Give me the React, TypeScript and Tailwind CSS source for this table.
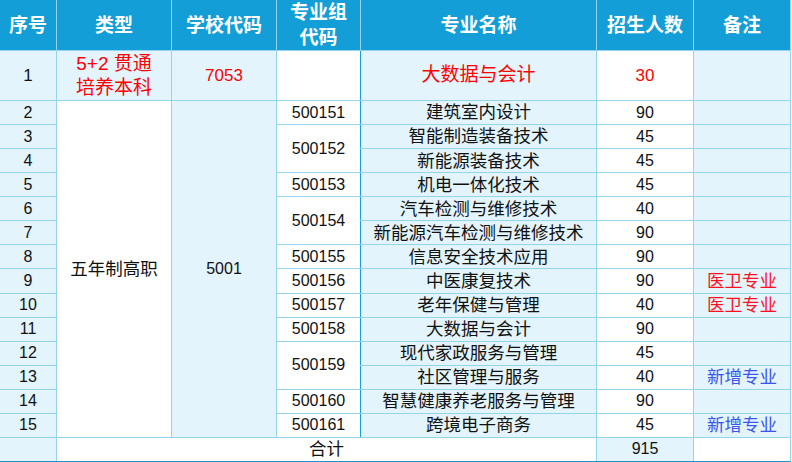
import React from "react";

// one row of the enrolment table
interface Major {
  no: number;
  code?: string;
  span?: number;
  name: string;
  count: number;
  note?: "red" | "blue";
  noteText?: string;
}

const majors: Major[] = [
  { no: 2, code: "500151", name: "建筑室内设计", count: 90 },
  { no: 3, code: "500152", span: 2, name: "智能制造装备技术", count: 45 },
  { no: 4, name: "新能源装备技术", count: 45 },
  { no: 5, code: "500153", name: "机电一体化技术", count: 45 },
  { no: 6, code: "500154", span: 2, name: "汽车检测与维修技术", count: 40 },
  { no: 7, name: "新能源汽车检测与维修技术", count: 90 },
  { no: 8, code: "500155", name: "信息安全技术应用", count: 90 },
  { no: 9, code: "500156", name: "中医康复技术", count: 90, note: "red", noteText: "医卫专业" },
  { no: 10, code: "500157", name: "老年保健与管理", count: 40, note: "red", noteText: "医卫专业" },
  { no: 11, code: "500158", name: "大数据与会计", count: 90 },
  { no: 12, code: "500159", span: 2, name: "现代家政服务与管理", count: 45 },
  { no: 13, name: "社区管理与服务", count: 40, note: "blue", noteText: "新增专业" },
  { no: 14, code: "500160", name: "智慧健康养老服务与管理", count: 90 },
  { no: 15, code: "500161", name: "跨境电子商务", count: 45, note: "blue", noteText: "新增专业" },
];

const cell = "flex items-center justify-center text-center";
const light = "bg-[#e3f4fc]";
const white = "bg-white";
const head = "bg-[#139ed7] text-white font-bold text-[19px] leading-[25px]";
const divider = "shadow-[-1px_0_0_#169fde]";

const App: React.FC = () => {
  return (
    <div
      className="w-[792px] h-[462px] bg-white"
      style={{ fontFamily: '"Liberation Sans", "Noto Sans CJK SC", sans-serif' }}
    >
      <div className="grid w-[791px] h-[462px] gap-px bg-[#93d5f1] border-r border-r-[#93d5f1] border-b border-b-[#2090c8] grid-cols-[56px_114px_104px_83px_235px_96px_96px] grid-rows-[50px_49px_repeat(14,23.07px)_23px] text-[#111]">
        {/* header */}
        <div className={`${cell} ${head}`}>序号</div>
        <div className={`${cell} ${head}`}>类型</div>
        <div className={`${cell} ${head}`}>学校代码</div>
        <div className={`${cell} ${head}`}>
          专业组
          <br />
          代码
        </div>
        <div className={`${cell} ${head}`}>专业名称</div>
        <div className={`${cell} ${head}`}>招生人数</div>
        <div className={`${cell} ${head}`}>备注</div>

        {/* row 1 */}
        <div className={`${cell} ${light} text-[17px]`}>1</div>
        <div className={`${cell} ${light} text-[19px] leading-[24px] text-[#ff0000]`}>
          5+2 贯通
          <br />
          培养本科
        </div>
        <div className={`${cell} ${light} text-[17px] text-[#ff0000]`}>7053</div>
        <div className={`${cell} ${white}`}></div>
        <div className={`${cell} ${light} ${divider} text-[19px] text-[#ff0000]`}>大数据与会计</div>
        <div className={`${cell} ${white} text-[17px] text-[#ff0000]`}>30</div>
        <div className={`${cell} ${light}`}></div>

        {/* merged cells for rows 2-15 */}
        <div className={`${cell} ${white} col-start-2 row-start-3 row-span-14 text-[17.5px]`}>五年制高职</div>
        <div className={`${cell} ${light} col-start-3 row-start-3 row-span-14 text-[16px]`}>5001</div>

        {majors.map((m) => {
          const r = m.no + 1;
          return (
            <React.Fragment key={m.no}>
              <div className={`${cell} ${light} col-start-1 text-[16px]`} style={{ gridRowStart: r }}>
                {m.no}
              </div>
              {m.code && (
                <div
                  className={`${cell} ${white} col-start-4 text-[16px]`}
                  style={{ gridRow: `${r} / span ${m.span ?? 1}` }}
                >
                  {m.code}
                </div>
              )}
              <div
                className={`${cell} ${light} ${divider} col-start-5 text-[17.5px] whitespace-nowrap`}
                style={{ gridRowStart: r }}
              >
                {m.name}
              </div>
              <div className={`${cell} ${white} col-start-6 text-[16px]`} style={{ gridRowStart: r }}>
                {m.count}
              </div>
              <div
                className={`${cell} ${light} col-start-7 text-[17.5px] ${
                  m.note === "red" ? "text-[#ff1020]" : "text-[#3d55f0]"
                }`}
                style={{ gridRowStart: r }}
              >
                {m.noteText}
              </div>
            </React.Fragment>
          );
        })}

        {/* total */}
        <div className={`${cell} ${light} col-start-1 row-start-17`}></div>
        <div className={`${cell} ${white} col-start-2 col-span-4 row-start-17 text-[17.5px]`}>合计</div>
        <div className={`${cell} ${light} col-start-6 row-start-17 text-[16px]`}>915</div>
        <div className={`${cell} ${white} col-start-7 row-start-17`}></div>
      </div>
    </div>
  );
};

export default App;
